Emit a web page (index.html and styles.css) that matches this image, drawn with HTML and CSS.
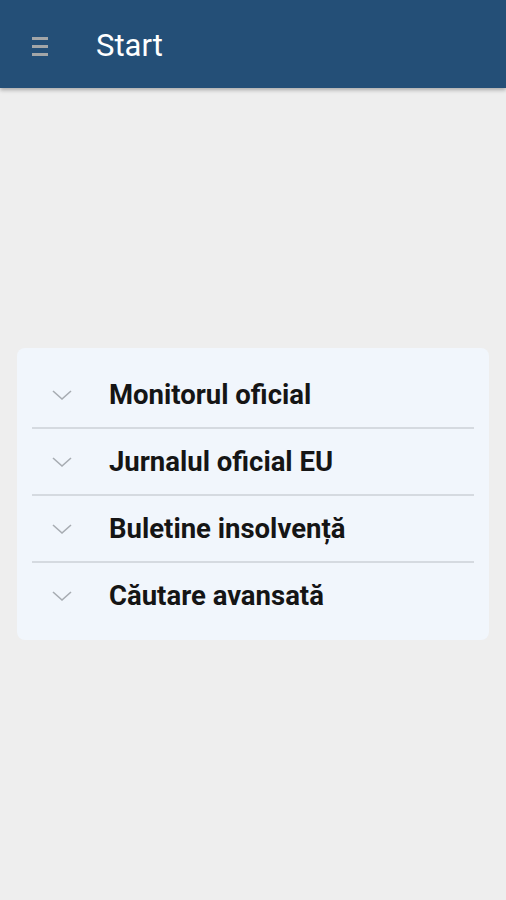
FILE: index.html
```html
<!DOCTYPE html>
<html lang="ro">
<head>
<meta charset="utf-8">
<link rel="stylesheet" href="styles.css">
</head>
<body>
<header class="appbar">
  <div class="menu"><span></span><span></span><span></span></div>
  <h1 class="title">Start</h1>
</header>
<main class="content">
  <section class="card">
    <div class="row"><svg class="chev" viewBox="0 0 20 12" width="20" height="12"><path d="M1 2 L10 10 L19 2" fill="none" stroke="#a7acb2" stroke-width="1.6"/></svg><span class="label">Monitorul oficial</span></div>
    <div class="row"><svg class="chev" viewBox="0 0 20 12" width="20" height="12"><path d="M1 2 L10 10 L19 2" fill="none" stroke="#a7acb2" stroke-width="1.6"/></svg><span class="label">Jurnalul oficial EU</span></div>
    <div class="row"><svg class="chev" viewBox="0 0 20 12" width="20" height="12"><path d="M1 2 L10 10 L19 2" fill="none" stroke="#a7acb2" stroke-width="1.6"/></svg><span class="label">Buletine insolvență</span></div>
    <div class="row last"><svg class="chev" viewBox="0 0 20 12" width="20" height="12"><path d="M1 2 L10 10 L19 2" fill="none" stroke="#a7acb2" stroke-width="1.6"/></svg><span class="label">Căutare avansată</span></div>
  </section>
</main>
</body>
</html>
```
FILE: styles.css
```css
html, body {
  margin: 0;
  padding: 0;
  background: #eeeeee;
  font-family: Roboto, "Liberation Sans", sans-serif;
  height: 100%;
}
.appbar {
  height: 88px;
  background: #244f77;
  display: flex;
  align-items: center;
  box-shadow: 0 2px 4px rgba(0,0,0,0.3);
  position: relative;
}
.menu {
  width: 16px;
  margin-left: 32px;
  display: flex;
  flex-direction: column;
  gap: 5px;
  margin-top: 4px;
}
.menu span {
  display: block;
  height: 3px;
  background: #a3a6a8;
}
.title {
  margin: 0 0 0 48px;
  color: #ffffff;
  font-weight: 400;
  font-size: 31px;
  line-height: 1;
  padding-top: 3px;
}
.content {
  padding: 260px 17px 0 17px;
}
.card {
  background: #f1f6fc;
  border-radius: 8px;
  padding: 14px 15px 12px 15px;
}
.row {
  height: 65px;
  border-bottom: 2px solid #d5dae0;
  display: flex;
  align-items: center;
}
.row.last {
  border-bottom: none;
}
.chev {
  margin-left: 20px;
  flex: none;
}
.label {
  margin-left: 37px;
  font-weight: 700;
  font-size: 27.5px;
  color: #151515;
}
```
